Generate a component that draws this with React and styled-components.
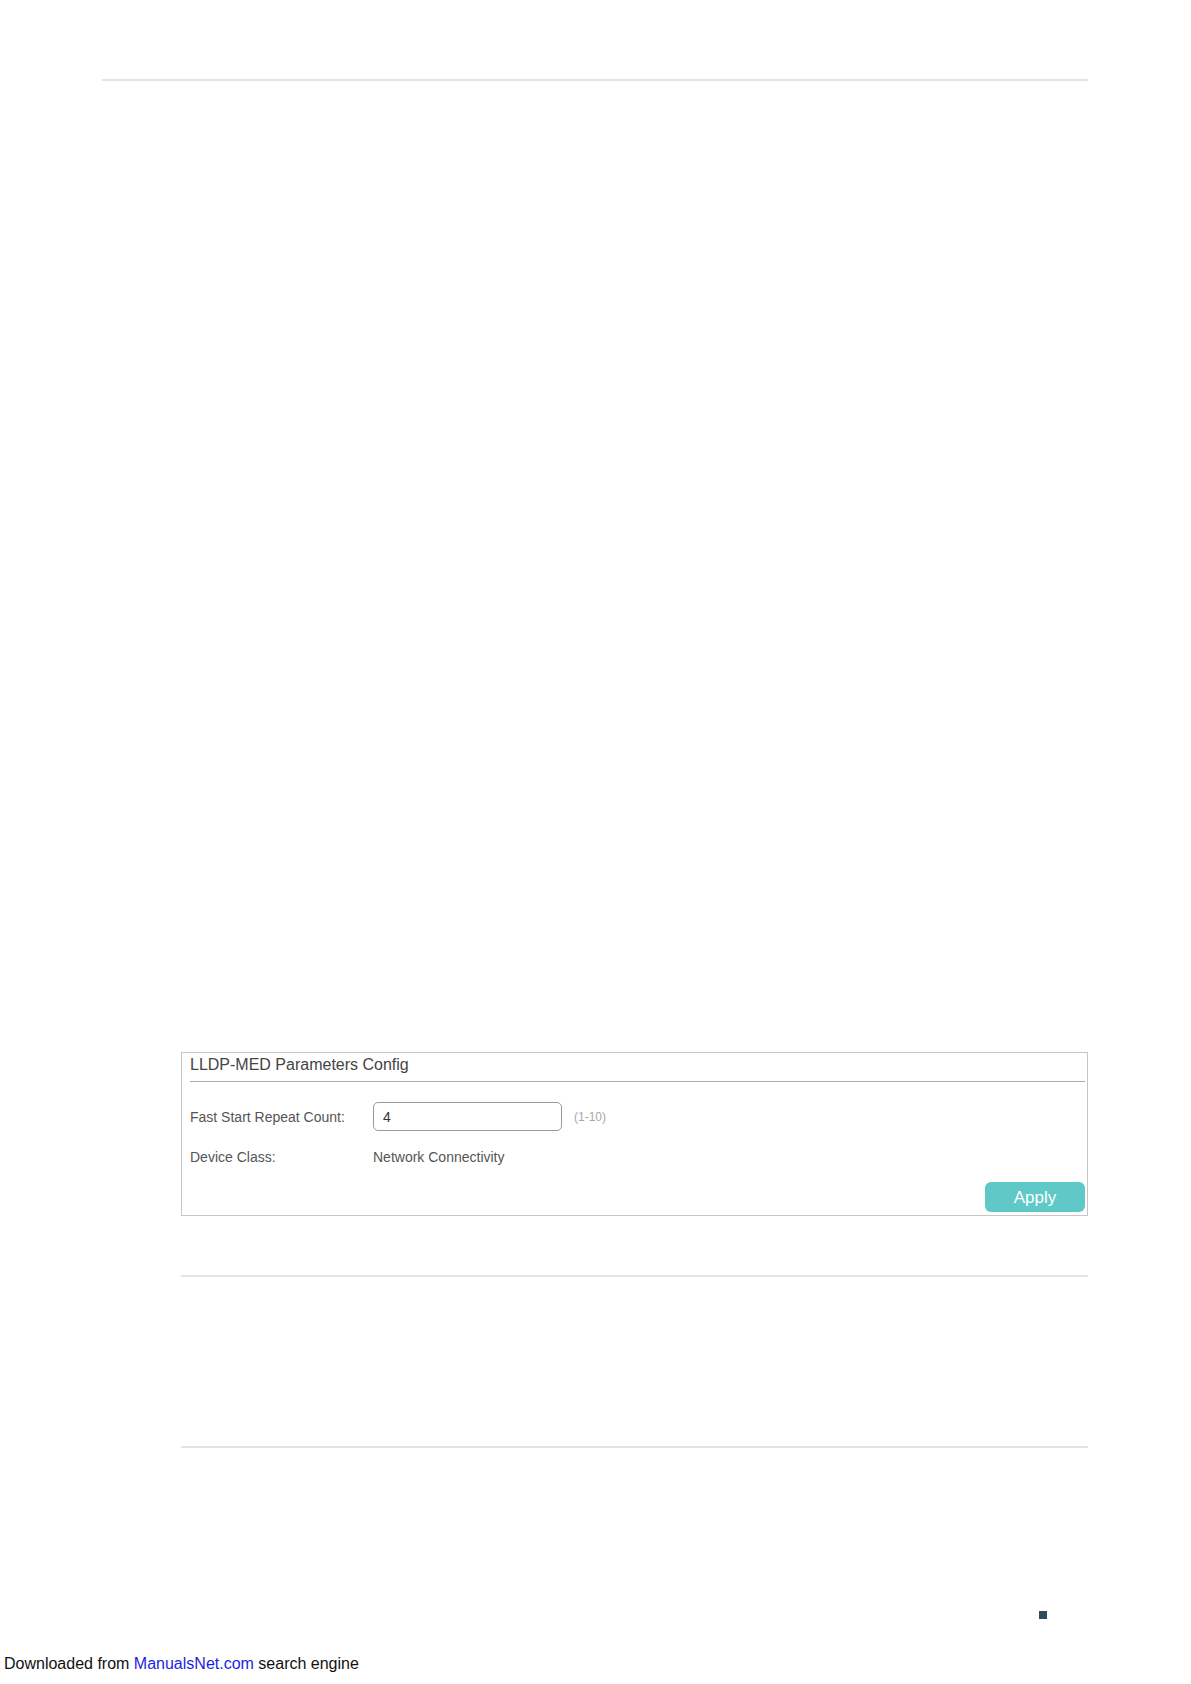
import React from "react";
import styled, { createGlobalStyle } from "styled-components";

const Global = createGlobalStyle`
  html, body { margin: 0; padding: 0; background: #fff; }
  body { font-family: "Liberation Sans", Arial, sans-serif; }
`;

const Page = styled.div`
  width: 1191px;
  height: 1684px;
  display: flex;
  flex-direction: column;
  align-items: flex-start;
  overflow: hidden;
`;

const Rule = styled.div`
  margin-top: ${(p) => p.$top}px;
  margin-left: ${(p) => p.$left}px;
  width: ${(p) => p.$width}px;
  height: 2px;
  background: ${(p) => p.$color || "#e3e3e3"};
`;

const Panel = styled.section`
  margin-top: 971px;
  margin-left: 181px;
  width: 907px;
  height: 164px;
  box-sizing: border-box;
  border: 1px solid #c6c6c6;
  padding: 0 2px 3px 8px;
  display: flex;
  flex-direction: column;
`;

const PanelTitle = styled.h2`
  margin: 0;
  padding: 2px 0 6px;
  font-size: 16px;
  line-height: 20px;
  font-weight: normal;
  color: #444;
  border-bottom: 1px solid #ababab;
`;

const Row = styled.div`
  display: flex;
  align-items: center;
  margin-top: ${(p) => p.$top}px;
  font-size: 14px;
  line-height: 20px;
  color: #555;
`;

const Label = styled.span`
  width: 183px;
  flex: none;
`;

const Input = styled.input`
  width: 189px;
  height: 29px;
  box-sizing: border-box;
  border: 1px solid #9a9a9a;
  border-radius: 5px;
  padding: 0 9px;
  font-family: "Liberation Sans", Arial, sans-serif;
  font-size: 14px;
  color: #333;
  outline: none;
`;

const Hint = styled.span`
  margin-left: 12px;
  font-size: 12px;
  color: #a8a8a8;
`;

const Value = styled.span`
  color: #555;
`;

const Actions = styled.div`
  display: flex;
  justify-content: flex-end;
  margin-top: 15px;
`;

const Button = styled.button`
  width: 100px;
  height: 30px;
  border: none;
  border-radius: 6px;
  background: #5ec9c7;
  color: #fff;
  font-family: "Liberation Sans", Arial, sans-serif;
  font-size: 17px;
  padding: 2px 0 0;
  cursor: pointer;
`;

const Marker = styled.div`
  margin-top: 163px;
  margin-left: 1039px;
  width: 8px;
  height: 8px;
  background: #2e4c5c;
`;

const Footer = styled.p`
  margin: 35px 0 0;
  padding-left: 4px;
  font-size: 16px;
  line-height: 20px;
  color: #111;
`;

const Link = styled.a`
  color: #1e1ee0;
  text-decoration: none;
`;

export default function App() {
  return (
    <>
      <Global />
      <Page>
        <Rule $top={79} $left={102} $width={986} />
        <Panel>
          <PanelTitle>LLDP-MED Parameters Config</PanelTitle>
          <Row $top={20}>
            <Label>Fast Start Repeat Count:</Label>
            <Input defaultValue="4" />
            <Hint>(1-10)</Hint>
          </Row>
          <Row $top={16}>
            <Label>Device Class:</Label>
            <Value>Network Connectivity</Value>
          </Row>
          <Actions>
            <Button>Apply</Button>
          </Actions>
        </Panel>
        <Rule $top={59} $left={181} $width={907} $color="#e4e6e6" />
        <Rule $top={169} $left={181} $width={907} $color="#dbe5e3" />
        <Marker />
        <Footer>
          Downloaded from <Link href="#">ManualsNet.com</Link> search engine
        </Footer>
      </Page>
    </>
  );
}
